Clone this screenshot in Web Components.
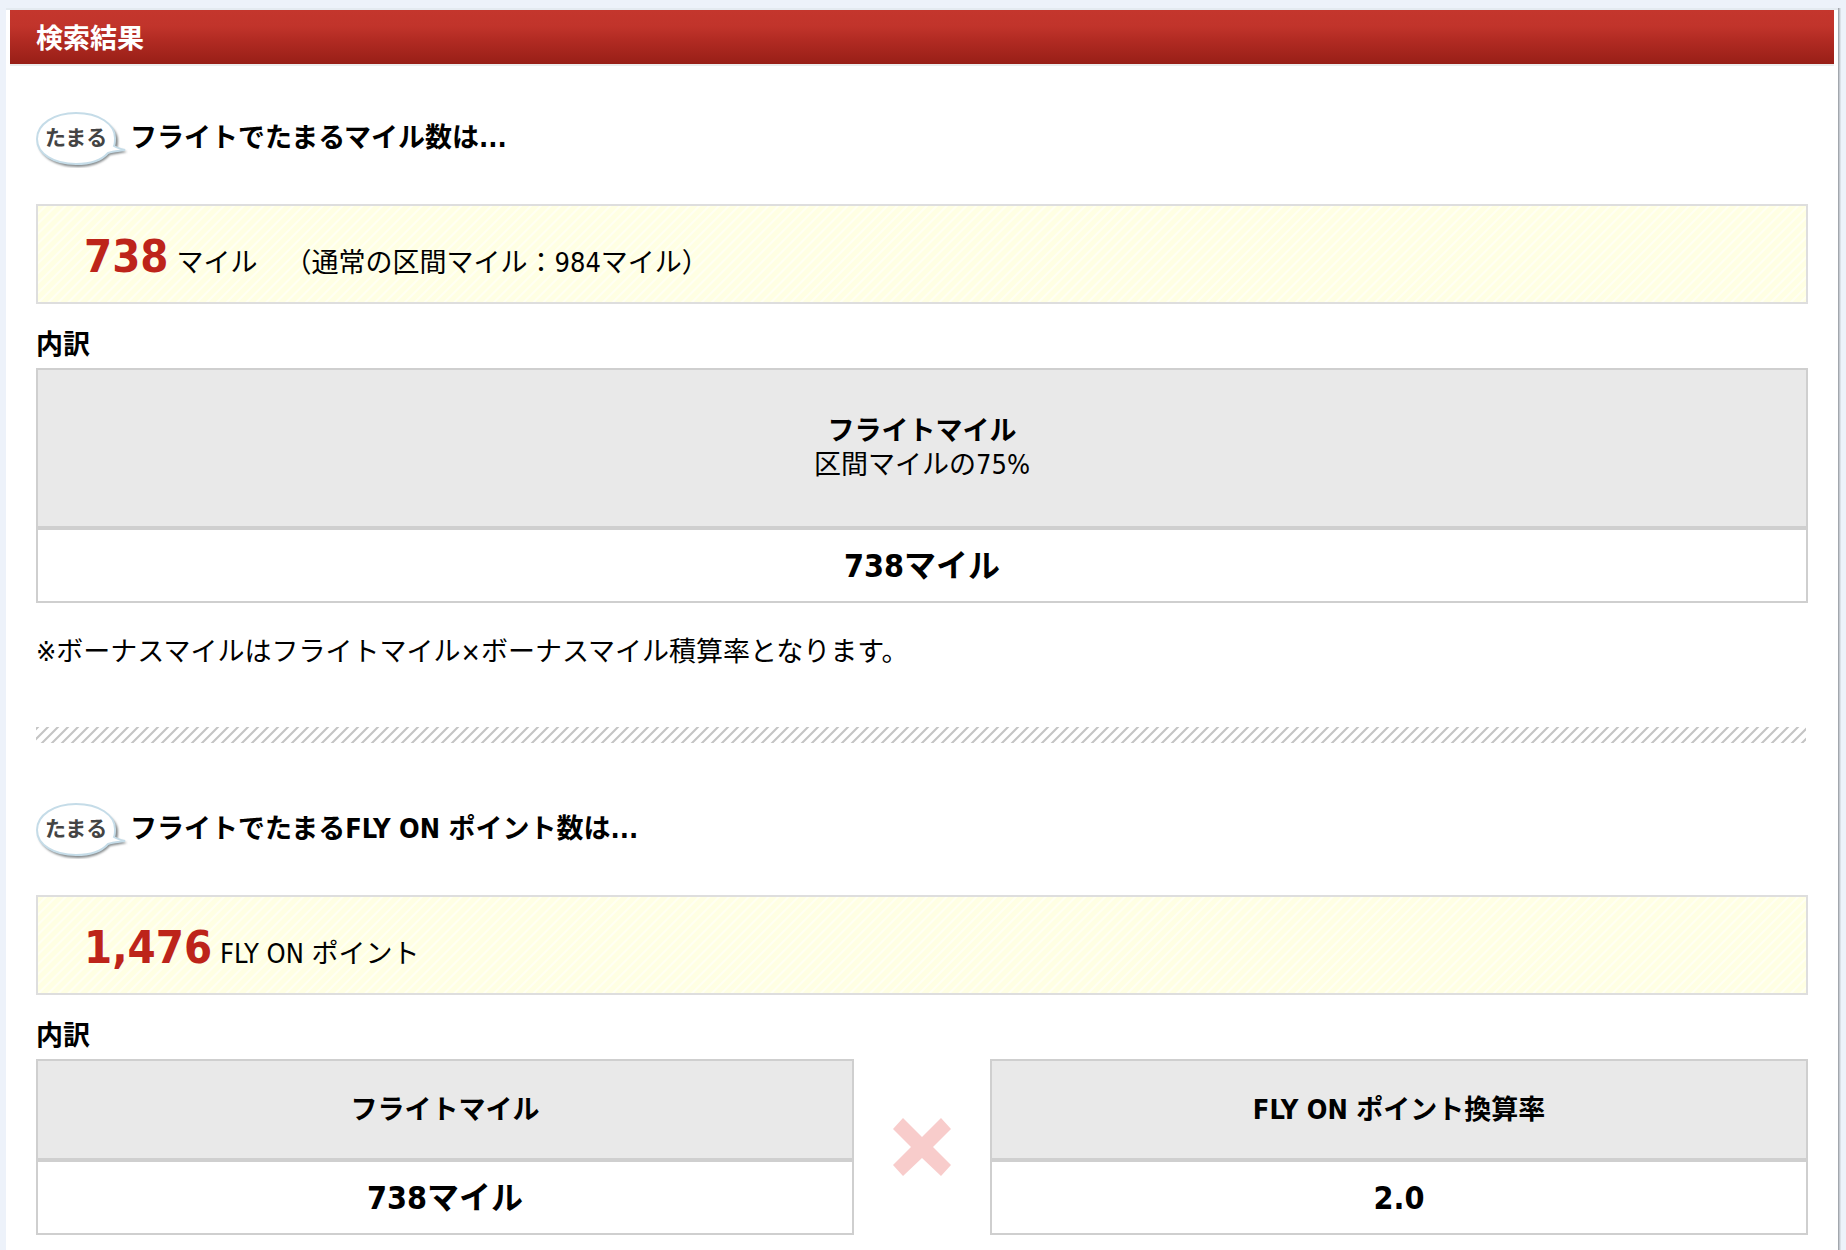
<!DOCTYPE html>
<html lang="ja">
<head>
<meta charset="utf-8">
<title>検索結果</title>
<style>
  body {
    margin: 0;
    background: #edf2fa;
    color: #000;
    font: 27px/34px "DejaVu Sans Condensed", "Noto Sans CJK JP", sans-serif;
    text-spacing-trim: space-all;
  }
</style>
</head>
<body>
<result-panel>
  <span slot="title">検索結果</span>
  <result-section>
    <span slot="heading">フライトでたまるマイル数は...</span>
    <total-box slot="total" value="738">マイル　（通常の区間マイル：984マイル）</total-box>
    <breakdown-table tall>
      <span slot="head">フライトマイル</span>
      <span slot="sub">区間マイルの75%</span>
      <span slot="value">738マイル</span>
    </breakdown-table>
    <span slot="note">※ボーナスマイルはフライトマイル×ボーナスマイル積算率となります。</span>
  </result-section>
  <hatch-rule></hatch-rule>
  <result-section>
    <span slot="heading">フライトでたまるFLY ON ポイント数は...</span>
    <total-box slot="total" value="1,476">FLY ON ポイント</total-box>
    <breakdown-table>
      <span slot="head">フライトマイル</span>
      <span slot="value">738マイル</span>
    </breakdown-table>
    <times-mark></times-mark>
    <breakdown-table>
      <span slot="head">FLY ON ポイント換算率</span>
      <span slot="value">2.0</span>
    </breakdown-table>
  </result-section>
</result-panel>

<script>
const define = (name, html, setup) => {
  const template = document.createElement('template');
  template.innerHTML = html;
  customElements.define(name, class extends HTMLElement {
    constructor() {
      super();
      this.attachShadow({ mode: 'open' }).append(template.content.cloneNode(true));
    }
    connectedCallback() { if (setup) setup(this, this.shadowRoot); }
  });
};

define('result-panel', `
  <style>
    :host { display: block; box-sizing: border-box; min-height: 100vh; padding: 8px 8px 0 6px; }
    main { box-sizing: border-box; min-height: calc(100vh - 8px); background: #fff; border-top: 2px solid #e4eaf0;
      box-shadow: 1px 0 0 #a2a7ad, 2px 0 0 #c3c8cf, 3px 0 0 #dbe1e8; padding: 0 4px 16px; }
    h1 { margin: 0; padding: 12px 26px 8px; color: #fff; font-size: 27px; font-weight: bold; line-height: 34px;
      background: linear-gradient(#c4362d 0, #c1342b 30%, #b22b23 55%, #981f17 100%);
      border-bottom: 2px solid #ebecec; background-clip: padding-box; }
    .body { padding: 0 26px; }
  </style>
  <main>
    <h1><slot name="title"></slot></h1>
    <div class="body"><slot></slot></div>
  </main>`);

define('speech-tag', `
  <style>
    :host { display: block; flex: none; width: 92px; height: 56px; }
    svg { display: block; }
    text { font: bold 21px "Noto Sans CJK JP", sans-serif; fill: #444; }
  </style>
  <svg width="92" height="56" viewBox="0 0 92 56" role="img" aria-label="たまる">
    <defs><filter id="soft" x="-10%" y="-10%" width="120%" height="130%"><feGaussianBlur stdDeviation="1.2"/></filter></defs>
    <path d="M42 4C64 4 82 15 82 28C82 31 82 34 81 36L91 40L74 43C67 51 55 55 42 55C19 55 2 44 2 29S19 4 42 4Z" fill="#858a8c" filter="url(#soft)"/>
    <path d="M40 1C63 1 79 12 79 26C79 29 79 32 78 34C81 36 85 37 89 38C82 39 77 39 72 41C65 49 54 52 40 52C18 52 1 42 1 27S18 1 40 1Z" fill="#fff" stroke="#c5dce8" stroke-width="2"/>
    <text x="9" y="33">たまる</text>
  </svg>`);

define('result-section', `
  <style>
    :host { display: block; }
    h2, h3, p { margin: 0; }
    h2 { display: flex; align-items: center; gap: 2px; padding: 46px 0 36px; font-size: 27px; }
    h2 span { padding-bottom: 4px; }
    h3 { padding: 24px 0 6px; font-size: 27px; }
    .tables { display: flex; align-items: center; }
    .note { padding-top: 32px; }
  </style>
  <h2><speech-tag></speech-tag><span><slot name="heading"></slot></span></h2>
  <slot name="total"></slot>
  <h3>内訳</h3>
  <div class="tables"><slot></slot></div>
  <slot name="note"></slot>`, (host, root) => {
    const note = root.querySelector('slot[name=note]');
    if (host.querySelector('[slot=note]')) {
      const p = document.createElement('p');
      p.className = 'note';
      note.replaceWith(p);
      p.append(note);
    }
  });

define('total-box', `
  <style>
    :host { display: block; border: 2px solid #dedede; padding: 27px 46px 21px;
      background: repeating-linear-gradient(135deg, #ffffe3 0 4px, #fffff3 5px 6px, #ffffe3 7px); }
    p { display: flex; align-items: baseline; gap: 8px; height: 48px; margin: 0; }
    strong { color: #bd241a; font-size: 45px; line-height: 48px; font-weight: bold; }
  </style>
  <p><strong></strong><span><slot></slot></span></p>`, (host, root) => {
    root.querySelector('strong').textContent = host.getAttribute('value');
  });

define('breakdown-table', `
  <style>
    :host { display: block; flex: 1 1 0; }
    table { width: 100%; border-collapse: collapse; border: 2px solid #cfcfcf; }
    th, td { padding: 0; text-align: center; }
    th { height: 97px; background: #e9e9e9; border-bottom: 4px solid #cfcfcf; font-weight: bold; }
    :host([tall]) th { height: 156px; }
    ::slotted([slot=sub]) { display: block; font-weight: normal; }
    td { height: 71px; font-size: 32px; font-weight: bold; }
  </style>
  <table>
    <thead><tr><th scope="col"><slot name="head"></slot><slot name="sub"></slot></th></tr></thead>
    <tbody><tr><td><slot name="value"></slot></td></tr></tbody>
  </table>`);

define('times-mark', `
  <style>
    :host { display: block; flex: none; padding: 0 38px; }
    svg { display: block; }
  </style>
  <svg width="60" height="60" viewBox="0 0 60 60" role="img" aria-label="×">
    <path d="M11 1L30 20L49 1L59 12L41 30L59 48L49 59L30 41L11 59L1 48L19 30L1 12Z" fill="#f8cccb"/>
  </svg>`);

define('hatch-rule', `
  <style>
    :host { display: block; padding: 58px 2px 14px 0; }
    svg { display: block; }
  </style>
  <svg width="100%" height="16" aria-hidden="true">
    <defs><pattern id="hatch" width="10" height="16" patternUnits="userSpaceOnUse">
      <path d="M-15 17L3 -1M-5 17L13 -1M5 17L23 -1" stroke="#c4c4c4" stroke-width="2"/>
    </pattern></defs>
    <rect width="100%" height="16" fill="url(#hatch)"/>
  </svg>`);
</script>
</body>
</html>
